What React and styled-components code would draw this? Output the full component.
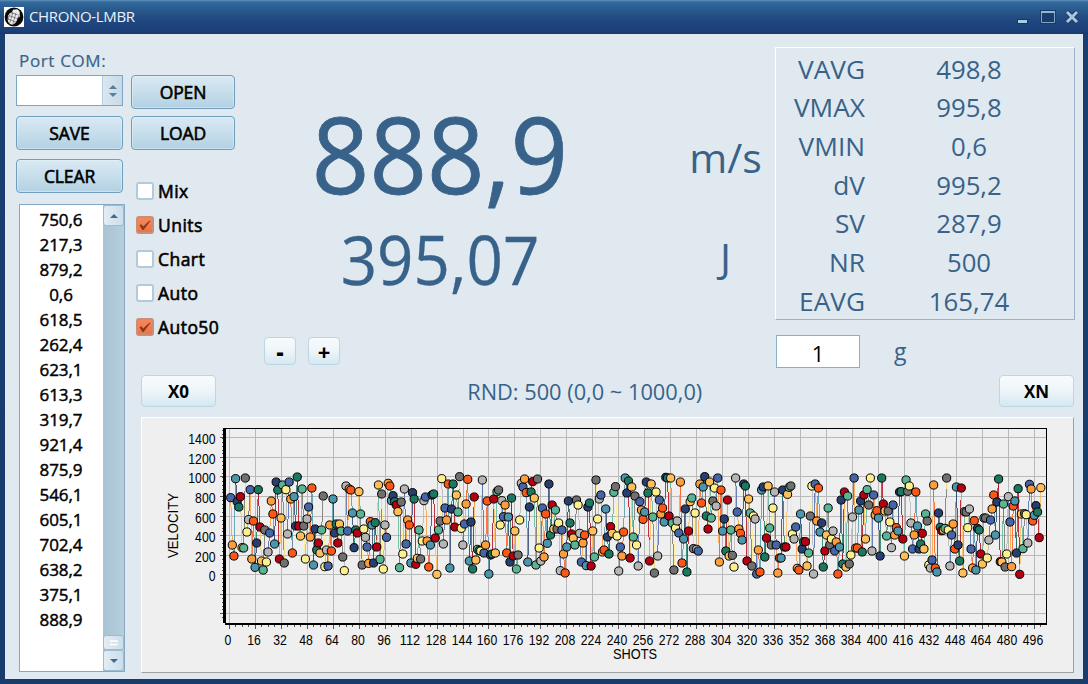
import React from "react";
import styled, { createGlobalStyle } from "styled-components";

const Global = createGlobalStyle`
  * { box-sizing: border-box; }
  body { margin: 0; overflow: hidden; }
  button, input { font: inherit; padding: 0; margin: 0; }
`;

const INK = "#386289";

const Window = styled.div`
  width: 1088px;
  height: 684px;
  display: flex;
  flex-direction: column;
  background: linear-gradient(#1b3e72 0, #1b3e72 34px, #193c6c 100%);
  font-family: "Open Sans", "Noto Sans", sans-serif;
  color: ${INK};
`;

const TitleBar = styled.header`
  flex: none;
  height: 34px;
  padding: 0 9px 0 4px;
  display: flex;
  align-items: center;
  background: linear-gradient(#5f93bb 0, #34699c 2px, #2c6196 6px, #285586 12px, #214880 20px, #1c4079 30px, #193a68 34px);
  color: #eaf3fb;
`;

const Title = styled.h1`
  flex: 1;
  margin: 0 0 3px 5px;
  font-size: 15px;
  font-weight: 400;
  letter-spacing: ${(p) => p.$track}px;
`;

const WindowButtons = styled.div`
  display: flex;
  align-items: center;
  gap: 9px;
`;

const Content = styled.main`
  flex: none;
  height: 645px;
  margin: 0 5px;
  display: flex;
  background: #e0e9f0;
`;

const Sidebar = styled.aside`
  width: 126px;
  padding: 15px 0 0 11px;
  display: flex;
  flex-direction: column;
`;

const PortLabel = styled.label`
  height: 26px;
  padding-left: 3px;
  line-height: 24px;
  font-size: 17px;
  letter-spacing: 0.65px;
  -webkit-text-stroke: 0.2px ${INK};
`;

const Spinner = styled.div`
  width: 107px;
  height: 31px;
  display: flex;
  border: 1px solid #7da5c4;
  background: #fff;
`;

const SpinnerArrows = styled.div`
  width: 20px;
  margin-left: auto;
  display: flex;
  align-items: center;
  justify-content: center;
  border-left: 1px solid #b3cbdc;
  background: linear-gradient(90deg, #dbe7f0, #c6dae8);
`;

const Button = styled.button`
  flex: none;
  width: ${(p) => p.$w}px;
  height: 33.5px;
  margin-top: ${(p) => p.$mt || 0}px;
  padding-top: 1px;
  border: 1px solid #6f9dbd;
  border-radius: 4px;
  background: linear-gradient(#d9e9f3, #c9dfec 45%, #b2d1e2);
  box-shadow: inset 0 0 0 1px rgba(235, 246, 252, 0.45);
  color: #000;
  font-size: 17.5px;
  font-weight: 400;
  letter-spacing: -0.1px;
  -webkit-text-stroke: 0.6px #000;
`;

const SoftButton = styled.button`
  width: ${(p) => p.$w}px;
  height: ${(p) => p.$h}px;
  border: 1px solid #bcd7e3;
  border-radius: 4px;
  background: linear-gradient(#f8fbfd, #eef5f9 50%, #d4e8f1);
  color: #000;
  font-size: ${(p) => p.$size}px;
  font-weight: ${(p) => p.$weight || 700};
  line-height: 1;
`;

const ListBox = styled.div`
  width: 106px;
  height: 468px;
  margin: 11.5px 0 0 3px;
  display: flex;
  border: 1px solid #84a9c4;
  background: #fff;
`;

const ListItems = styled.ol`
  flex: 1;
  margin: 0;
  padding: 2px 1px 0 0;
  list-style: none;
  color: #000;
  font-size: 17px;
  text-align: center;
  -webkit-text-stroke: 0.45px #000;
`;

const ListItem = styled.li`
  height: 25px;
  line-height: 25px;
  letter-spacing: -0.1px;
`;

const ScrollBar = styled.div`
  width: 21px;
  display: flex;
  flex-direction: column;
  background: linear-gradient(90deg, #a9c3d4, #b6cedd);
`;

const ScrollPart = styled.div`
  height: ${(p) => p.$h}px;
  margin-top: ${(p) => (p.$push ? "auto" : "0")};
  display: flex;
  align-items: center;
  justify-content: center;
  border: 1px solid #9dbcd2;
  border-radius: 3px;
  background: linear-gradient(90deg, #e3edf5, #cbdeea);
`;

const MainPane = styled.section`
  width: 952px;
  padding: 13px 0 0;
  display: flex;
  flex-direction: column;
`;

const UpperRow = styled.div`
  height: 328px;
  display: flex;
`;

const Options = styled.div`
  width: 133px;
  padding-top: 28px;
  display: flex;
  flex-direction: column;
`;

const CheckList = styled.div`
  display: flex;
  flex-direction: column;
  padding: 32px 0 0 5px;
  gap: 16.1px;
`;

const CheckRow = styled.label`
  height: 18px;
  display: flex;
  align-items: center;
  gap: 4px;
  color: #000;
  font-size: 17.5px;
  letter-spacing: 0.45px;
  line-height: 18px;
  white-space: nowrap;
  -webkit-text-stroke: 0.6px #000;
`;

const CheckBox = styled.span`
  width: 18px;
  height: 18px;
  display: flex;
  align-items: center;
  justify-content: center;
  border: 2px solid ${(p) => (p.$on ? "#c98e78" : "#b3cadb")};
  border-radius: 3px;
  background: ${(p) => (p.$on ? "linear-gradient(#f4885c, #ee7444)" : "#fff")};
`;

const CheckText = styled.span`
  padding-top: 1px;
`;

const Readouts = styled.div`
  width: 511px;
  padding-top: 53px;
  display: flex;
  flex-direction: column;
`;

const ReadoutRow = styled.div`
  height: ${(p) => p.$h}px;
  display: grid;
  grid-template-columns: 352px 159px;
  align-items: center;
`;

const Reading = styled.span`
  text-align: center;
  font-size: ${(p) => p.$size}px;
  line-height: 1;
  white-space: nowrap;
  padding-bottom: ${(p) => p.$lift}px;
  transform: scaleX(${(p) => p.$sx || 0.94});
  -webkit-text-stroke: ${(p) => p.$stroke || 0}px ${INK};
`;

const Unit = styled.span`
  padding-left: 60px;
  padding-bottom: ${(p) => p.$lift || 0}px;
  width: 159px;
  text-align: center;
  font-size: 41px;
  line-height: 1;
`;

const Steppers = styled.div`
  display: flex;
  gap: 12px;
  margin-top: 32px;
`;

const StatsColumn = styled.div`
  width: 301px;
  display: flex;
  flex-direction: column;
`;

const Stats = styled.dl`
  width: 300px;
  height: 273px;
  margin: 0;
  padding: 1.5px 0 0;
  display: grid;
  grid-template-columns: 89px 1fr;
  grid-auto-rows: 38.65px;
  align-items: center;
  border: 1px solid #fff;
  border-right-color: #9bb2c7;
  border-bottom-color: #9bb2c7;
  font-size: 26px;
  line-height: 1;
`;

const StatName = styled.dt`
  text-align: right;
  transform: scaleX(1.01);
  transform-origin: right;
`;

const StatValue = styled.dd`
  margin: 0;
  width: 208px;
  text-align: center;
  transform: scaleX(0.99);
`;

const WeightRow = styled.div`
  height: 33px;
  display: flex;
  align-items: center;
  margin: 15px 0 0 1px;
  font-size: 23px;
  line-height: 28px;
`;

const WeightInput = styled.input`
  width: 84px;
  height: 33px;
  margin-right: 34px;
  padding-top: 3px;
  border: 1px solid #89afca;
  background: #fff;
  color: #000;
  font-size: 22px;
  text-align: center;
`;

const WeightUnit = styled.span`
  padding-bottom: 2px;
`;

const NavRow = styled.div`
  height: 32px;
  padding: 0 9px 0 10px;
  display: flex;
  align-items: center;
  justify-content: space-between;
`;

const RunInfo = styled.span`
  position: relative;
  left: -23px;
  font-size: 22px;
  line-height: 32px;
  transform: scaleX(0.99);
`;

const ChartPanel = styled.div`
  width: 933.5px;
  height: 256px;
  margin: 10px 0 0 9.5px;
  border: 1px solid #fff;
  border-right-color: #a0a0a0;
  border-bottom-color: #a0a0a0;
  background: #efefef;

  svg { display: block; margin: -1px; }
`;

const PALETTE = [
  "#4565a9", "#fb9e3b", "#fc5717", "#4c96ad", "#273f70", "#1a7860",
  "#b50012", "#fcbf59", "#58b492", "#707070", "#fdf08c", "#b5b5b5",
];

// Twelve shots per line, one for each palette entry. Each figure is the
// marker's drop below y = 450, in thirds of a pixel.
const SHOTS = [
  143,285,318,86,155,171,140,293,294,84,246,209,
  119,327,213,352,279,119,231,333,360,240,336,306,
  249,153,192,282,96,120,327,204,105,339,119,252,
  96,147,309,140,228,81,228,258,117,228,327,207,
  171,261,114,345,237,300,279,309,240,138,350,300,
  348,225,303,147,249,222,279,222,243,321,362,108,
  243,117,120,189,293,240,249,125,192,345,237,262,
  291,340,215,225,339,218,291,105,328,132,357,225,
  262,100,108,152,137,155,165,185,353,156,312,117,
  282,210,225,339,128,147,343,325,240,327,273,152,
  141,273,351,285,135,132,264,373,240,213,86,282,
  174,210,102,354,177,102,231,135,186,80,235,285,
  222,162,88,333,216,357,141,330,298,302,303,90,
  309,285,153,372,315,312,147,309,125,120,225,152,
  200,165,309,201,336,144,318,243,357,315,210,100,
  111,87,128,336,171,126,95,144,345,87,294,333,
  174,321,192,280,102,255,165,237,180,237,219,362,
  240,312,369,291,153,219,252,264,285,150,165,250,
  336,279,255,347,171,159,348,243,321,90,207,147,
  135,306,300,177,261,312,230,250,127,110,258,363,
  291,318,246,84,129,93,324,111,261,138,285,348,
  155,180,208,186,96,129,333,102,201,369,126,318,
  150,192,174,216,82,84,198,84,219,360,234,213,
  249,96,339,267,177,366,243,155,144,296,189,298,
  303,102,159,111,80,198,237,96,204,153,114,168,
  84,336,120,243,207,303,150,318,240,316,351,84,
  186,237,250,270,102,108,333,147,189,348,198,207,
  372,300,366,120,111,321,264,108,234,285,174,126,
  285,369,324,324,120,291,291,133,112,108,252,267,
  231,355,360,192,297,275,275,348,309,198,108,372,
  102,213,114,246,219,351,303,255,174,285,267,243,
  303,276,372,291,150,342,126,351,138,342,315,201,
  84,294,294,180,153,306,135,267,119,165,84,303,
  135,195,182,204,318,84,162,183,258,183,216,293,
  165,255,233,243,126,125,267,318,90,124,108,219,
  297,255,126,228,297,282,250,297,192,213,345,354,
  330,105,354,366,189,232,242,240,235,84,240,348,
  255,222,297,111,285,333,114,369,185,186,233,177,
  297,354,212,360,235,240,312,342,204,204,324,270,
  210,177,135,255,156,87,335,336,162,351,312,140,
  216,350,168,153,309,116,373,192,296,191,194,279,
  103,117,213,196,167,186,263,113,
].map((drop, i) => ({
  x: 230.7 + i * 1.6235,
  y: 450 + drop / 3,
  color: PALETTE[i % 12],
}));

const GRID_Y = [437.5, 457.5, 476.5, 496.5, 516.5, 535.5, 555.5, 574.5, 594.5, 613.5];
const TICKS_X = Array.from({ length: 32 }, (_, i) => i * 16);
const xOf = (shot) => Math.round(228.8 + shot * 1.623) + 0.5;

const AxisText = styled.text`
  font-family: "Liberation Sans", Arial, sans-serif;
  font-size: 13.8px;
  fill: #000;
`;

function AxisNumber({ x, y, value, anchor }) {
  const s = String(value);
  return (
    <AxisText x={x} y={y} textAnchor={anchor} textLength={s.length * 6.8} lengthAdjust="spacingAndGlyphs">
      {s}
    </AxisText>
  );
}

function VelocityChart() {
  return (
    <svg width="934" height="256" viewBox="141 417 934 256">
      <g stroke="#b9b9b9" shapeRendering="crispEdges">
        {GRID_Y.map((y) => <line key={y} x1="226" x2="1046" y1={y} y2={y} />)}
        {TICKS_X.map((t) => <line key={t} x1={xOf(t)} x2={xOf(t)} y1="429" y2="623" />)}
      </g>
      <g stroke="#555" shapeRendering="crispEdges">
        {GRID_Y.map((y) => <line key={y} x1="220" x2="223" y1={y} y2={y} />)}
        {Array.from({ length: 49 }, (_, i) => (
          <line key={i} x1="222" x2="224" y1={430.5 + i * 3.9} y2={430.5 + i * 3.9} />
        ))}
        {TICKS_X.map((t) => <line key={t} x1={xOf(t)} x2={xOf(t)} y1="624" y2="629" />)}
        {Array.from({ length: 126 }, (_, i) => (
          <line key={i} x1={xOf(i * 4)} x2={xOf(i * 4)} y1="624" y2="627" />
        ))}
      </g>
      <g shapeRendering="crispEdges">
        {SHOTS.slice(1).map((p, i) => (
          <line key={i} x1={SHOTS[i].x} y1={SHOTS[i].y} x2={p.x} y2={p.y} stroke={p.color} strokeWidth="0.8" />
        ))}
      </g>
      <g stroke="#000">
        {SHOTS.map((p, i) => <circle key={i} cx={p.x} cy={p.y} r="4.1" fill={p.color} />)}
      </g>
      <g fill="#000" shapeRendering="crispEdges">
        <rect x="223" y="428" width="3" height="195" />
        <rect x="223" y="428" width="824" height="1" />
        <rect x="1046" y="428" width="1" height="196" />
        <rect x="225" y="623" width="822" height="2" />
      </g>
      {GRID_Y.slice(0, 8).map((y, i) => (
        <AxisNumber key={y} x={215.5} y={y + 6} value={1400 - i * 200} anchor="end" />
      ))}
      {TICKS_X.map((t) => (
        <AxisNumber key={t} x={xOf(t) - 1.5} y={644.5} value={t} anchor="middle" />
      ))}
      <AxisText x="635" y="659" textAnchor="middle" textLength="44" lengthAdjust="spacingAndGlyphs">SHOTS</AxisText>
      <AxisText textAnchor="middle" textLength="65" lengthAdjust="spacingAndGlyphs" transform="translate(178 525.5) rotate(-90)">
        VELOCITY
      </AxisText>
    </svg>
  );
}

const GrenadeIcon = () => (
  <svg width="20" height="20" viewBox="0 0 20 20">
    <rect width="20" height="20" fill="#fff" />
    <circle cx="10" cy="10" r="9.4" fill="#080808" />
    <path d="M8 5.2 L9 2.8 L13.4 2.2 L15.6 4.6 L15.8 9.5 L14.6 11 L14 6.2 C14.6 9.5 13 16.5 8.5 17.8 C4.8 17.4 3 13.8 4 10.2 C4.8 7.6 6.2 6 8 5.2Z" fill="#f1f1f1" />
    <path d="M5 8.5 L13 11.5 M3.8 12 L11.8 15 M7 5.8 L14.2 8 M9 5 L5.6 16.5 M12 5.6 L8.6 18 M6 6.5 L3.8 13.5" stroke="#444" strokeWidth="0.6" fill="none" />
    <path d="M6.5 5.8 L4.2 9.2" stroke="#fff" strokeWidth="0.8" />
  </svg>
);

const Minimize = () => (
  <svg width="14" height="16" viewBox="0 0 14 16">
    <rect x="0" y="10" width="11" height="5" fill="#163765" />
    <rect x="1" y="11" width="9" height="3" fill="#a9cbe3" />
  </svg>
);
const Maximize = () => (
  <svg width="16" height="16" viewBox="0 0 16 16">
    <rect x="0" y="1" width="16" height="14" fill="#1a3c6c" />
    <path d="M1.5 2.5H14.5V13.5H1.5Z" fill="none" stroke="#7fa5c4" />
    <path d="M1 3H15" stroke="#91b6d2" strokeWidth="2" />
  </svg>
);
const Close = () => (
  <svg width="14" height="16" viewBox="0 0 14 16">
    <path d="M2 3 L12 13 M12 3 L2 13" stroke="#183866" strokeWidth="5" />
    <path d="M2 3 L12 13 M12 3 L2 13" stroke="#a5c7df" strokeWidth="3" />
  </svg>
);

const Arrow = ({ up, size = 8 }) => (
  <svg width={size} height="4" viewBox="0 0 8 4" preserveAspectRatio="none">
    <path d={up ? "M0 4 L4 0 L8 4Z" : "M0 0 L4 4 L8 0Z"} fill="#42698d" />
  </svg>
);
const ArrowPair = () => (
  <svg width="8" height="14" viewBox="0 0 8 14">
    <path d="M0 5 L4 1 L8 5Z M0 9 L4 13 L8 9Z" fill="#557f9f" />
  </svg>
);
const Tick = () => (
  <svg width="14" height="12" viewBox="0 0 14 12">
    <path d="M1.5 6.2 L3.4 5.2 L5.2 7.6 L11.6 1.4 L12.4 2 L5.6 11 L4.4 11Z" fill="#873a1b" />
  </svg>
);
const Grip = () => (
  <svg width="8" height="6" viewBox="0 0 8 6">
    <path d="M0 1H8M0 4.5H8" stroke="#fff" strokeWidth="1.4" />
  </svg>
);

const RECENT = ["750,6", "217,3", "879,2", "0,6", "618,5", "262,4", "623,1", "613,3", "319,7", "921,4", "875,9", "546,1", "605,1", "702,4", "638,2", "375,1", "888,9"];
const OPTIONS = [["Mix", false], ["Units", true], ["Chart", false], ["Auto", false], ["Auto50", true]];
const STATS = [["VAVG", "498,8"], ["VMAX", "995,8"], ["VMIN", "0,6"], ["dV", "995,2"], ["SV", "287,9"], ["NR", "500"], ["EAVG", "165,74"]];

export default function App() {
  return (
    <Window>
      <Global />
      <TitleBar>
        <GrenadeIcon />
        <Title $track={-0.35}>CHRONO-LMBR</Title>
        <WindowButtons><Minimize /><Maximize /><Close /></WindowButtons>
      </TitleBar>
      <Content>
        <Sidebar>
          <PortLabel>Port COM:</PortLabel>
          <Spinner><SpinnerArrows><ArrowPair /></SpinnerArrows></Spinner>
          <Button $w={107} $mt={10}>SAVE</Button>
          <Button $w={107} $mt={9.5}>CLEAR</Button>
          <ListBox>
            <ListItems>{RECENT.map((v) => <ListItem key={v}>{v}</ListItem>)}</ListItems>
            <ScrollBar>
              <ScrollPart $h={21}><Arrow up /></ScrollPart>
              <ScrollPart $h={15} $push><Grip /></ScrollPart>
              <ScrollPart $h={21}><Arrow /></ScrollPart>
            </ScrollBar>
          </ListBox>
        </Sidebar>
        <MainPane>
          <UpperRow>
            <Options>
              <Button $w={104}>OPEN</Button>
              <Button $w={104} $mt={7.5}>LOAD</Button>
              <CheckList>
                {OPTIONS.map(([name, on]) => (
                  <CheckRow key={name}>
                    <CheckBox $on={on}>{on && <Tick />}</CheckBox>
                    <CheckText>{name}</CheckText>
                  </CheckRow>
                ))}
              </CheckList>
            </Options>
            <Readouts>
              <ReadoutRow $h={114}>
                <Reading $size={106} $lift={9} $sx={0.95} $stroke={0.8}>888,9</Reading>
                <Unit>m/s</Unit>
              </ReadoutRow>
              <ReadoutRow $h={91}>
                <Reading $size={68.5} $lift={1} $sx={0.93} $stroke={0.3}>395,07</Reading>
                <Unit $lift={4}>J</Unit>
              </ReadoutRow>
              <Steppers>
                <SoftButton $w={32} $h={28} $size={22} $weight={800}>-</SoftButton>
                <SoftButton $w={32} $h={28} $size={22}>+</SoftButton>
              </Steppers>
            </Readouts>
            <StatsColumn>
              <Stats>
                {STATS.map(([name, value]) => (
                  <React.Fragment key={name}>
                    <StatName>{name}</StatName>
                    <StatValue>{value}</StatValue>
                  </React.Fragment>
                ))}
              </Stats>
              <WeightRow><WeightInput defaultValue="1" /><WeightUnit>g</WeightUnit></WeightRow>
            </StatsColumn>
          </UpperRow>
          <NavRow>
            <SoftButton $w={75} $h={32} $size={17}>X0</SoftButton>
            <RunInfo>RND: 500 (0,0 ~ 1000,0)</RunInfo>
            <SoftButton $w={75} $h={32} $size={17}>XN</SoftButton>
          </NavRow>
          <ChartPanel><VelocityChart /></ChartPanel>
        </MainPane>
      </Content>
    </Window>
  );
}
